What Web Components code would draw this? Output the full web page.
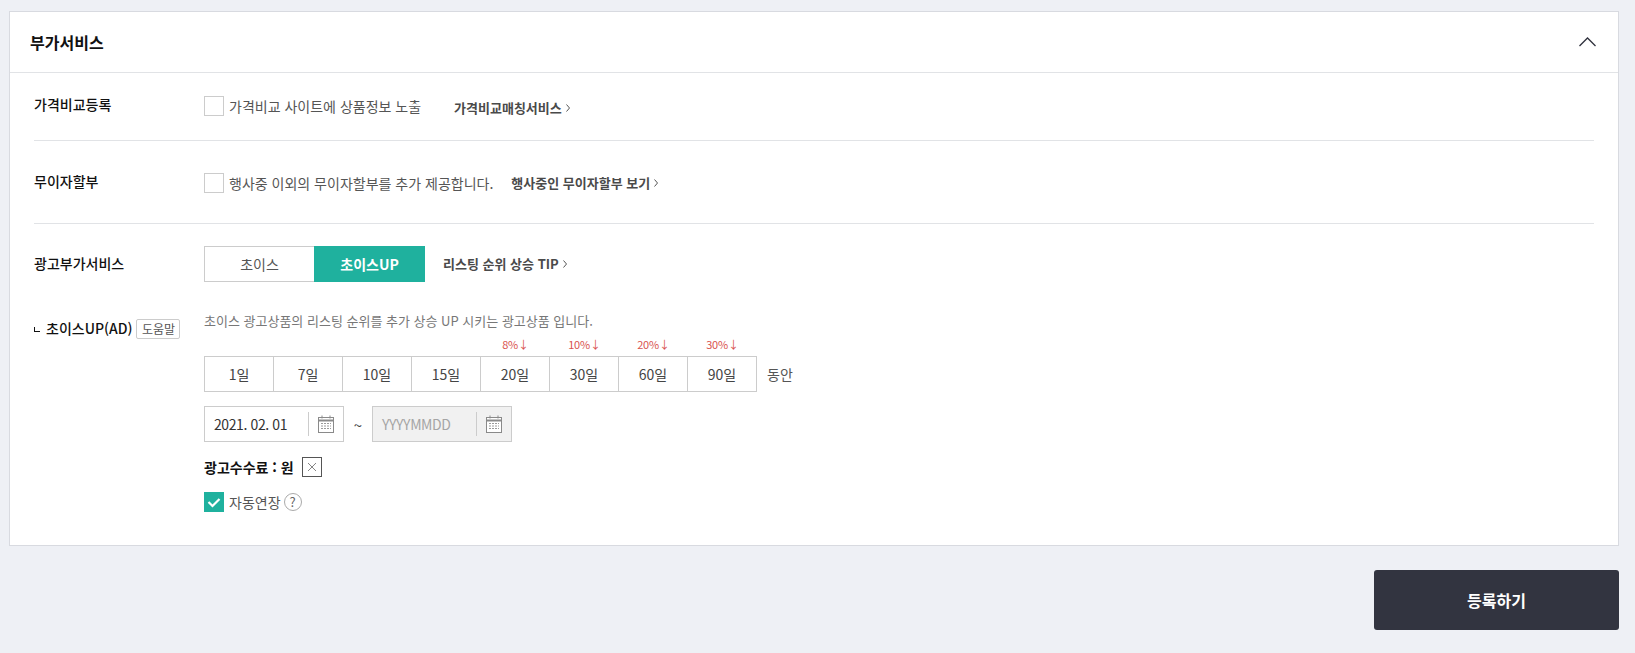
<!DOCTYPE html>
<html lang="ko">
<head>
<meta charset="utf-8">
<title>부가서비스</title>
<style>
  html, body { margin: 0; background: #eef0f5; }
  body {
    padding: 11px 16px 23px 9px;
    font-family: "Noto Sans CJK KR", "Noto Sans", sans-serif;
    font-size: 14px;
    color: #333;
  }
</style>
</head>
<body>
  <addon-panel heading="부가서비스">
    <addon-row label="가격비교등록" top="23" bottom="22" lift="2" divider>
      <div style="display:flex;align-items:flex-start">
        <addon-check>가격비교 사이트에 상품정보 노출</addon-check>
        <addon-link style="margin:2px 0 0 33px">가격비교매칭서비스</addon-link>
      </div>
    </addon-row>
    <addon-row label="무이자할부" top="31" bottom="30" lift="1" divider>
      <div style="display:flex;align-items:center">
        <addon-check>행사중 이외의 무이자할부를 추가 제공합니다.</addon-check>
        <addon-link style="margin:1px 0 0 18px">행사중인 무이자할부 보기</addon-link>
      </div>
    </addon-row>
    <addon-row label="광고부가서비스" top="22" bottom="0" lift="2" center>
      <div style="display:flex;align-items:center">
        <addon-toggle first="초이스" second="초이스UP"></addon-toggle>
        <addon-link style="margin-left:18px">리스팅 순위 상승 TIP</addon-link>
      </div>
    </addon-row>
    <choice-detail></choice-detail>
  </addon-panel>
  <submit-bar>등록하기</submit-bar>

<script>
const calendarIcon = `
  <svg width="16" height="18" viewBox="0 0 16 18" fill="none" stroke="#8a8a8a" stroke-width="1">
    <rect x="0.5" y="2.5" width="15" height="15" fill="#fff"/>
    <path d="M0.5 5.5h15" stroke-width="2"/>
    <path d="M4 0.5v3M12 0.5v3"/>
    <path d="M3 8.5h10M3 11h10M3 13.5h10" stroke-dasharray="2 1" stroke="#9a9a9a"/>
  </svg>`;

class AddonPanel extends HTMLElement {
  connectedCallback() {
    this.attachShadow({ mode: 'open' });
    this.shadowRoot.innerHTML = `
      <style>
        :host { display: block; background: #fff; border: 1px solid #d8dae0; }
        header {
          height: 60px;
          border-bottom: 1px solid #e1e3e6;
          display: flex;
          align-items: center;
          justify-content: space-between;
          padding: 0 22px 0 20px;
        }
        h2 { margin: 0; font-size: 16px; font-weight: 700; color: #111; }
        svg { display: block; }
        .body { padding: 0 24px 33px 24px; }
      </style>
      <header>
        <h2>${this.getAttribute('heading')}</h2>
        <svg width="17" height="10" viewBox="0 0 17 10" fill="none" stroke="#2f313d" stroke-width="1.3"><path d="M0.5 9 L8.5 1 L16.5 9"/></svg>
      </header>
      <div class="body"><slot></slot></div>
    `;
  }
}
customElements.define('addon-panel', AddonPanel);

class AddonRow extends HTMLElement {
  connectedCallback() {
    this.attachShadow({ mode: 'open' });
    const top = this.getAttribute('top');
    const bottom = this.getAttribute('bottom');
    const lift = this.getAttribute('lift') || 0;
    this.shadowRoot.innerHTML = `
      <style>
        :host { display: block; }
        :host([divider]) { border-bottom: 1px solid #e1e3e6; }
        .row {
          display: flex;
          align-items: ${this.hasAttribute('center') ? 'center' : 'flex-start'};
          padding: ${top}px 0 ${bottom}px;
        }
        .label {
          width: 170px;
          flex: none;
          font-size: 14px;
          line-height: 20px;
          font-weight: 500;
          color: #111;
          margin-top: -${lift}px;
        }
      </style>
      <div class="row">
        <div class="label">${this.getAttribute('label')}</div>
        <div><slot></slot></div>
      </div>
    `;
  }
}
customElements.define('addon-row', AddonRow);

class AddonCheck extends HTMLElement {
  connectedCallback() {
    this.attachShadow({ mode: 'open' });
    this.shadowRoot.innerHTML = `
      <style>
        :host { display: inline-flex; align-items: center; font-size: 14px; line-height: 20px; color: #555; }
        .box {
          width: 20px; height: 20px; box-sizing: border-box;
          border: 1px solid #ccc; background: #fff; margin-right: 5px;
          display: flex; align-items: center; justify-content: center;
        }
        :host([checked]) .box { background: #1fb19e; border-color: #1fb19e; }
        svg { display: ${this.hasAttribute('checked') ? 'block' : 'none'}; }
      </style>
      <span class="box">
        <svg width="14" height="11" viewBox="0 0 14 11" fill="none" stroke="#fff" stroke-width="2.2"><path d="M1.5 5 L5.5 9 L12.5 2"/></svg>
      </span>
      <slot></slot>
    `;
  }
}
customElements.define('addon-check', AddonCheck);

class AddonLink extends HTMLElement {
  connectedCallback() {
    this.attachShadow({ mode: 'open' });
    this.shadowRoot.innerHTML = `
      <style>
        :host { display: inline-flex; align-items: center; font-size: 13px; line-height: 20px; font-weight: 700; color: #4a4a4a; white-space: nowrap; }
        svg { margin-left: 4px; }
      </style>
      <slot></slot>
      <svg width="4" height="8" viewBox="0 0 4 8" fill="none" stroke="#555" stroke-width="1"><path d="M0.5 0.5 L3.5 4 L0.5 7.5"/></svg>
    `;
  }
}
customElements.define('addon-link', AddonLink);

class AddonToggle extends HTMLElement {
  connectedCallback() {
    this.attachShadow({ mode: 'open' });
    this.shadowRoot.innerHTML = `
      <style>
        :host { display: flex; width: 221px; height: 36px; font-size: 14px; }
        span { display: flex; align-items: center; justify-content: center; box-sizing: border-box; }
        .off { width: 110px; border: 1px solid #ccc; border-right: 0; color: #555; background: #fff; }
        .on { width: 111px; background: #1fb19e; color: #fff; font-weight: 700; }
      </style>
      <span class="off">${this.getAttribute('first')}</span>
      <span class="on">${this.getAttribute('second')}</span>
    `;
  }
}
customElements.define('addon-toggle', AddonToggle);

class DayPicker extends HTMLElement {
  connectedCallback() {
    this.attachShadow({ mode: 'open' });
    const days = [['1일'], ['7일'], ['10일'], ['15일'], ['20일', '8%↓'], ['30일', '10%↓'], ['60일', '20%↓'], ['90일', '30%↓']];
    this.shadowRoot.innerHTML = `
      <style>
        :host { display: block; }
        .grid { display: grid; grid-template-columns: 70px repeat(7, 69px) auto; width: max-content; }
        .off { height: 20px; font-size: 11px; line-height: 16px; color: #d9534f; text-align: center; letter-spacing: -0.2px; }
        .day {
          height: 36px; box-sizing: border-box; display: flex; align-items: center; justify-content: center;
          border: 1px solid #ccc; border-left: 0; font-size: 14px; color: #444; background: #fff;
        }
        .day.first { border-left: 1px solid #ccc; }
        .unit { padding-left: 10px; font-size: 14px; color: #555; line-height: 36px; }
      </style>
      <div class="grid">
        ${days.map(d => `<div class="off">${d[1] || ''}</div>`).join('')}<div></div>
        ${days.map((d, i) => `<div class="day${i ? '' : ' first'}">${d[0]}</div>`).join('')}
        <div class="unit">동안</div>
      </div>
    `;
  }
}
customElements.define('day-picker', DayPicker);

class DateField extends HTMLElement {
  connectedCallback() {
    this.attachShadow({ mode: 'open' });
    this.shadowRoot.innerHTML = `
      <style>
        :host { display: flex; align-items: center; width: 140px; height: 36px; box-sizing: border-box; border: 1px solid #ccc; background: #fff; font-size: 14px; color: #333; letter-spacing: -0.4px; }
        :host([disabled]) { background: #f1f1f1; color: #a5a5a5; }
        .val { flex: 1; padding-left: 9px; white-space: nowrap; }
        .ico { height: 24px; width: 35px; box-sizing: border-box; border-left: 1px solid #ccc; display: flex; align-items: center; justify-content: center; }
      </style>
      <div class="val"><slot></slot></div>
      <div class="ico">${calendarIcon}</div>
    `;
  }
}
customElements.define('date-field', DateField);

class ChoiceDetail extends HTMLElement {
  connectedCallback() {
    this.attachShadow({ mode: 'open' });
    this.shadowRoot.innerHTML = `
      <style>
        :host { display: flex; padding-top: 30px; }
        .side { width: 170px; flex: none; display: flex; align-items: center; align-self: flex-start; height: 20px; margin-top: 7px; }
        .mark { width: 6px; height: 5px; margin-right: 6px; margin-top: 0; border-left: 1px solid #111; border-bottom: 1px solid #111; box-sizing: border-box; flex: none; }
        .name { font-size: 14px; font-weight: 500; color: #111; white-space: nowrap; margin-top: -3px; }
        .help { margin-left: 4px; height: 20px; width: 44px; box-sizing: border-box; border: 1px solid #ccc; border-radius: 2px; font-size: 12px; line-height: 18px; text-align: center; color: #555; flex: none; }
        .main { flex: 1; }
        .desc { font-size: 13px; line-height: 18px; color: #777; }
        day-picker { margin-top: 6px; }
        .dates { display: flex; align-items: center; margin-top: 14px; }
        .tilde { width: 28px; text-align: center; color: #444; font-size: 15px; }
        .fee { display: flex; align-items: center; margin-top: 15px; font-size: 14px; font-weight: 700; color: #111; }
        .x { width: 20px; height: 20px; margin-left: 8px; box-sizing: border-box; border: 1px solid #555; display: flex; align-items: center; justify-content: center; }
        .auto { display: flex; align-items: center; margin-top: 15px; }
        .q { width: 18px; height: 18px; margin-left: 3px; box-sizing: border-box; border: 1px solid #aaa; border-radius: 50%; font-size: 13px; line-height: 16px; text-align: center; color: #666; }
      </style>
      <div class="side">
        <span class="mark"></span>
        <span class="name">초이스UP(AD)</span>
        <span class="help">도움말</span>
      </div>
      <div class="main">
        <div class="desc">초이스 광고상품의 리스팅 순위를 추가 상승 UP 시키는 광고상품 입니다.</div>
        <day-picker></day-picker>
        <div class="dates">
          <date-field>2021. 02. 01</date-field>
          <span class="tilde">~</span>
          <date-field disabled>YYYYMMDD</date-field>
        </div>
        <div class="fee">
          <span>광고수수료 : 원</span>
          <span class="x"><svg width="10" height="10" viewBox="0 0 10 10" stroke="#666" stroke-width="0.8"><path d="M1 1 L9 9 M9 1 L1 9"/></svg></span>
        </div>
        <div class="auto">
          <addon-check checked>자동연장</addon-check>
          <span class="q">?</span>
        </div>
      </div>
    `;
  }
}
customElements.define('choice-detail', ChoiceDetail);

class SubmitBar extends HTMLElement {
  connectedCallback() {
    this.attachShadow({ mode: 'open' });
    this.shadowRoot.innerHTML = `
      <style>
        :host { display: flex; justify-content: flex-end; margin-top: 24px; }
        button {
          width: 245px; height: 60px; border: 0; border-radius: 3px;
          background: #323440; color: #fff;
          font: 700 16px "Noto Sans CJK KR", "Noto Sans", sans-serif;
        }
      </style>
      <button><slot></slot></button>
    `;
  }
}
customElements.define('submit-bar', SubmitBar);
</script>
</body>
</html>
